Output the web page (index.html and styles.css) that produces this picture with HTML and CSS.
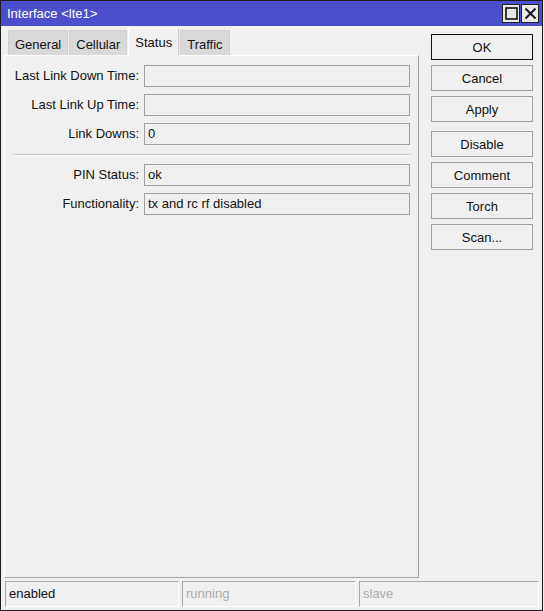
FILE: index.html
```html
<!DOCTYPE html>
<html>
<head>
<meta charset="utf-8">
<link rel="stylesheet" href="styles.css">
</head>
<body>
<div class="window">
  <div class="titlebar">
    <span class="title">Interface &lt;lte1&gt;</span>
    <div class="controls">
      <div class="ctl"><svg width="13" height="13" viewBox="0 0 13 13"><rect x="1" y="1" width="11" height="11" fill="none" stroke="#111" stroke-width="1.6"/></svg></div>
      <div class="ctl"><svg width="13" height="13" viewBox="0 0 13 13"><path d="M1.5 1.5 L11.5 11.5 M11.5 1.5 L1.5 11.5" stroke="#111" stroke-width="1.8"/></svg></div>
    </div>
  </div>
  <div class="main">
    <div class="left">
      <div class="tabs">
        <div class="tab">General</div>
        <div class="tab">Cellular</div>
        <div class="tab active">Status</div>
        <div class="tab">Traffic</div>
      </div>
      <div class="panel">
        <div class="form">
          <label>Last Link Down Time:</label><div class="field"></div>
          <label>Last Link Up Time:</label><div class="field"></div>
          <label>Link Downs:</label><div class="field">0</div>
        </div>
        <div class="sep"></div>
        <div class="form">
          <label>PIN Status:</label><div class="field">ok</div>
          <label>Functionality:</label><div class="field">tx and rc rf disabled</div>
        </div>
      </div>
    </div>
    <div class="buttons">
      <div class="btn default">OK</div>
      <div class="btn">Cancel</div>
      <div class="btn">Apply</div>
      <div class="btn group">Disable</div>
      <div class="btn">Comment</div>
      <div class="btn">Torch</div>
      <div class="btn">Scan...</div>
    </div>
  </div>
  <div class="statusbar">
    <div class="cell">enabled</div>
    <div class="cell dim">running</div>
    <div class="cell dim wide">slave</div>
  </div>
</div>
</body>
</html>
```

FILE: styles.css
```css
* { box-sizing: border-box; }
html, body { margin: 0; padding: 0; background: #f0f0f0; }
body { font-family: "Liberation Sans", Arial, sans-serif; font-size: 13px; color: #111; }

.window {
  width: 543px;
  height: 611px;
  border: 1px solid #1c1c1c;
  background: #f0f0f0;
  display: flex;
  flex-direction: column;
}

.titlebar {
  height: 25px;
  background: #4b4fcb;
  display: flex;
  align-items: center;
  justify-content: space-between;
  padding-left: 6px;
  padding-right: 3px;
  flex: none;
}
.title { color: #fff; font-size: 13px; }
.controls { display: flex; gap: 1px; }
.ctl {
  width: 18px;
  height: 19px;
  border: 1px solid #222;
  background: #e8e8e8;
  display: flex;
  align-items: center;
  justify-content: center;
}

.main {
  display: flex;
  flex: 1;
  min-height: 0;
}

.left {
  width: 418px;
  padding-left: 3px;
  padding-top: 2px;
  display: flex;
  flex-direction: column;
}

.tabs {
  display: flex;
  height: 27px;
  align-items: flex-end;
  padding-left: 4px;
}
.tab {
  height: 25px;
  background: #d9d9d9;
  border: 1px solid #cfcfcf;
  border-bottom: none;
  padding: 6px 6px 0 6px;
  margin-right: 1px;
  color: #111;
}
.tab.active {
  height: 28px;
  background: #f0f0f0;
  border-color: #ffffff #c8c8c8 #f0f0f0 #ffffff;
  padding-top: 6px;
  margin-bottom: -1px;
  position: relative;
  z-index: 1;
}

.panel {
  height: 523px;
  border: 1px solid #fff;
  border-right-color: #a0a0a0;
  border-bottom-color: #a0a0a0;
  padding: 9px 7px 0 0;
}

.form {
  display: grid;
  grid-template-columns: 134px 266px;
  column-gap: 5px;
  row-gap: 7px;
}
.form label {
  text-align: right;
  line-height: 22px;
  white-space: nowrap;
}
.field {
  height: 22px;
  border: 1px solid #a0a0a0;
  padding-left: 3px;
  line-height: 20px;
}

.sep {
  margin: 9px 0 8px 8px;
  height: 2px;
  border-top: 1px solid #c4c4c4;
  border-bottom: 1px solid #fff;
}

.buttons {
  padding-top: 8px;
  padding-left: 12px;
  display: flex;
  flex-direction: column;
  gap: 5px;
}
.btn {
  width: 102px;
  height: 26px;
  border: 1px solid #a0a0a0;
  background: #f0f0f0;
  text-align: center;
  line-height: 25px;
  color: #111;
}
.btn.default { border-color: #111; }
.btn.group { margin-top: 4px; }

.statusbar {
  display: flex;
  gap: 3px;
  padding: 3px 3px 3px 4px;
  flex: none;
}
.cell {
  width: 174px;
  height: 26px;
  border: 1px solid #a8a8a8;
  border-right-color: #fff;
  border-bottom-color: #fff;
  padding-left: 3px;
  line-height: 24px;
}
.cell.wide { flex: 1; }
.cell.dim { color: #acacac; }
```
